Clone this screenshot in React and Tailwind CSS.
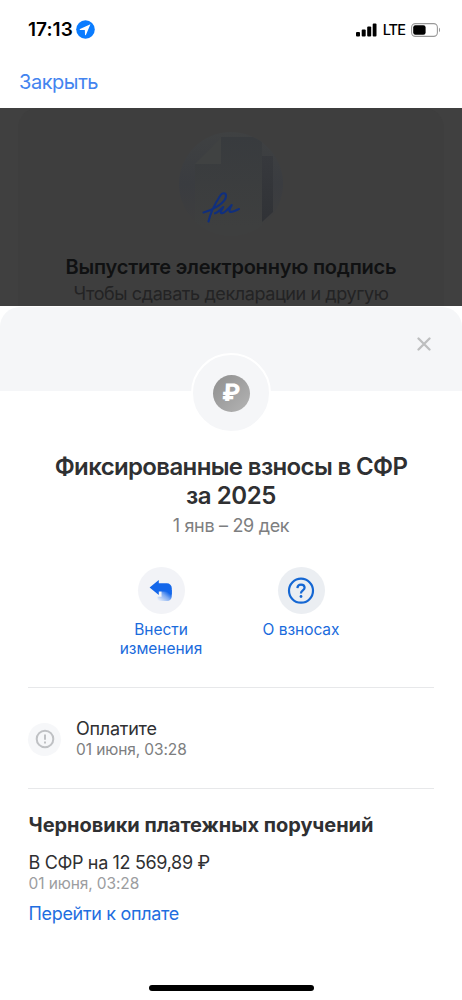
import React from 'react';

const LocationBadge = () => (
    <svg viewBox="0 0 20 20" className="h-[19px] w-[19px]">
        <circle cx="10" cy="10" r="9.8" fill="#0a7cff" />
        <path d="M15.2 4.6 4.2 9.6c-.5.2-.4.8.1.8l5 .2.2 5c0 .6.7.7.9.2z" fill="#fff" />
    </svg>
);

const SignalIcon = () => (
    <svg viewBox="0 0 21 14" className="h-[14px] w-[21px]">
        <rect x="0" y="9" width="4" height="4.6" rx="1" />
        <rect x="5.7" y="6.6" width="4" height="7" rx="1" />
        <rect x="11.2" y="3.6" width="4" height="10" rx="1" />
        <rect x="16.7" y="0.4" width="3.8" height="13.2" rx="1" />
    </svg>
);

const BatteryIcon = () => (
    <svg viewBox="0 0 30 14" className="h-[14px] w-[30px]">
        <rect x="0.6" y="0.6" width="25.8" height="12.8" rx="3.8" fill="none" stroke="#999" strokeWidth="1.1" />
        <rect x="2.2" y="2.2" width="12.4" height="9.6" rx="2.2" />
        <path d="M28 4.8c1.2.5 1.2 3.9 0 4.4z" fill="#888" />
    </svg>
);

const SignatureArt = () => (
    <svg viewBox="0 0 104 104" className="h-[104px] w-[104px]">
        <defs>
            <clipPath id="art-circle">
                <circle cx="52" cy="52" r="52" />
            </clipPath>
            <linearGradient id="art-bg" x1="0" y1="0" x2="0" y2="1">
                <stop offset="0" stopColor="#3f4142" />
                <stop offset="0.5" stopColor="#3a3c40" />
                <stop offset="0.9" stopColor="#3e3e3e" />
            </linearGradient>
            <linearGradient id="art-page" x1="0" y1="0" x2="0" y2="1">
                <stop offset="0" stopColor="#383b3e" />
                <stop offset="0.9" stopColor="#3e3f3f" />
            </linearGradient>
            <linearGradient id="art-side" x1="0" y1="0" x2="0" y2="1">
                <stop offset="0" stopColor="#37393d" />
                <stop offset="1" stopColor="#303236" />
            </linearGradient>
        </defs>
        <g clipPath="url(#art-circle)">
            <rect width="104" height="104" fill="url(#art-bg)" />
            <path d="M42 5h41v99H16V32h26z" fill="url(#art-page)" />
            <path d="M42 6v26H16z" fill="#404242" />
            <path d="M83 24h11v56L83 90z" fill="url(#art-side)" />
        </g>
        <path
            d="M24.500 80.500c8-1.800 22.500-9.500 22.500-16.500 0-3.500-3.600-3.800-6 0C36.500 71 31.500 80 29.500 89.500M36 81.300c3.200-1.200 5.500-3.500 8.200-6.300-1.700 3.200-3.500 6-1.800 6.300 2.800.4 7.100-4.800 10.300-8.300-2 3.500-3.400 6.700-1 6.900 2.800.2 5.800-2.100 8.300-2.900"
            fill="none"
            stroke="#102f7e"
            strokeWidth="2.100"
            strokeLinecap="round"
            strokeLinejoin="round"
        />
    </svg>
);

const CloseIcon = () => (
    <svg viewBox="0 0 14 14" className="h-[14px] w-[14px]">
        <path d="m1.500 1.500 11 11m0-11-11 11" stroke="#bdbebf" strokeWidth="2.300" strokeLinecap="round" />
    </svg>
);

const UndoIcon = () => (
    <svg viewBox="0 0 24 24" className="h-6 w-6">
        <defs>
            <linearGradient id="undo-tail" x1="1" y1="0.1" x2="0.1" y2="1">
                <stop offset="0.2" stopColor="#1467ea" />
                <stop offset="0.5" stopColor="#7daaf2" />
                <stop offset="1" stopColor="#f0f3f9" />
            </linearGradient>
        </defs>
        <path d="M12.500 11h10.200v6.500a4.500 4.500 0 0 1-4.500 4.500H8.500v-4.300h4z" fill="url(#undo-tail)" />
        <path d="M9.800 1.100v3.200h8a5 5 0 0 1 5 5v6.600c-1.500-2.200-3-3.400-5-3.400h-8v3.600L.6 8.500z" fill="#1467ea" />
    </svg>
);

const HelpIcon = () => (
    <svg viewBox="0 0 28 28" className="h-7 w-7" fill="none" stroke="#1567d3" strokeWidth="2.200">
        <circle cx="14" cy="13.700" r="12" />
        <path d="M10.400 11.100c.1-2.100 1.600-3.500 3.600-3.500s3.600 1.200 3.600 3.200c0 2.500-3.600 2.700-3.600 5.400v.3" />
        <circle cx="14" cy="19.500" r="1.400" fill="#1567d3" stroke="none" />
    </svg>
);

const AlertIcon = () => (
    <svg viewBox="0 0 20 20" className="h-5 w-5" fill="none" stroke="#bfc1c4" strokeWidth="2">
        <circle cx="10" cy="10" r="8.300" />
        <path d="M10 5.500v5.300M10 12.500v2" />
    </svg>
);

const actions = [
    { name: 'Внести изменения', icon: UndoIcon, bg: 'bg-[#f2f3f7]' },
    { name: 'О взносах', icon: HelpIcon, bg: 'bg-[#ebeef2]' },
];

const StatusBar = () => (
    <div className="flex h-[59px] items-center justify-between pl-[28px] pr-[21px]">
        <div className="flex items-center gap-[3px]">
            <span className="pt-[2px] text-[19px] font-semibold tracking-[0.05px]">17:13</span>
            <LocationBadge />
        </div>
        <div className="flex items-center">
            <SignalIcon />
            <span className="ml-[6px] mr-[6px] text-[14.500px] font-medium tracking-[-0.9px]">LTE</span>
            <BatteryIcon />
        </div>
    </div>
);

const Backdrop = () => (
    <div className="h-[198px] overflow-hidden bg-[#404040] px-[18px]">
        <div className="flex h-[220px] flex-col items-center rounded-[20px] bg-[#3e3e3e] pt-[24px]">
            <SignatureArt />
            <div className="mt-[17px] whitespace-nowrap text-[20px] font-semibold leading-[28px] tracking-[-0.22px] text-[#101112]">
                Выпустите электронную подпись
            </div>
            <div className="whitespace-nowrap text-[18px] leading-[26px] tracking-[-0.4px] text-[#232324]">
                Чтобы сдавать декларации и другую
            </div>
        </div>
    </div>
);

const App = () => {
    return (
        <div className="flex h-[1000px] w-[462px] flex-col overflow-hidden bg-white font-['Inter',sans-serif] text-black">
            <StatusBar />
            <div className="flex h-[49px] items-center pb-[3px] pl-[19px]">
                <button type="button" className="text-[20px] leading-[24px] tracking-[-0.45px] text-[#4384ef]">Закрыть</button>
            </div>

            <Backdrop />

            <section className="flex flex-1 flex-col pt-px text-[#2f3032]">
                <div className="flex h-[84px] justify-end rounded-t-[20px] bg-[#f5f6f8] pr-[31px] pt-[30px]">
                    <button type="button" aria-label="Закрыть окно" className="h-[14px]">
                        <CloseIcon />
                    </button>
                </div>

                <div className="-mt-[38px] flex flex-col items-center">
                    <div className="flex h-[80px] w-[80px] items-center justify-center rounded-full border-2 border-white bg-[#f5f6f8]">
                        <div className="flex h-[37px] w-[37px] items-center justify-center rounded-full bg-linear-to-br from-[#8f8f8f] to-[#b4b4b4]">
                            <span className="-skew-x-3 text-[24px] font-extrabold leading-none text-white">₽</span>
                        </div>
                    </div>
                    <h1 className="mt-[20px] text-center text-[24px] font-semibold leading-[28.500px] tracking-[-0.64px]">
                        Фиксированные взносы в СФР
                        <br />
                        <span className="tracking-[-0.4px]">за 2025</span>
                    </h1>
                    <p className="mt-[3px] text-[18px] leading-[26px] tracking-[-0.32px] text-[#7d7e80]">1 янв – 29 дек</p>
                </div>

                <div className="mt-[28px] flex justify-center">
                    {actions.map((item) => (
                        <button key={item.name} type="button" className="flex w-[140px] flex-col items-center px-5 text-[15.500px] leading-[19px] tracking-[-0.05px] text-[#1a6bdc]">
                            <span className={`mb-[6px] flex h-[47px] w-[47px] items-center justify-center rounded-full ${item.bg}`}>
                                <item.icon />
                            </span>
                            {item.name}
                        </button>
                    ))}
                </div>

                <div className="mx-[28px] mt-[29px] flex h-[102px] items-center border-y border-[#e7e8ea] pt-[2px]">
                    <div className="mr-[15px] flex h-[33px] w-[33px] items-center justify-center rounded-full bg-[#f6f7f9]">
                        <AlertIcon />
                    </div>
                    <div className="pb-[2px]">
                        <div className="text-[18px] leading-[22px] tracking-[-0.25px]">Оплатите</div>
                        <div className="text-[15.500px] leading-[19px] tracking-[-0.1px] text-[#7d7e80]">01 июня, 03:28</div>
                    </div>
                </div>

                <div className="pl-[28.500px] pr-[28px] pt-[22px]">
                    <h2 className="text-[20px] font-bold leading-[28px] tracking-[-0.02px]">Черновики платежных поручений</h2>
                    <div className="mt-[13px] text-[18px] leading-[22px] tracking-[-0.35px]">В СФР на 12 569,89 ₽</div>
                    <div className="text-[15.500px] leading-[20px] tracking-[-0.1px] text-[#9c9d9f]">01 июня, 03:28</div>
                    <a href="#pay" className="mt-[9px] block text-[18px] leading-[22px] tracking-[-0.32px] text-[#1f6ee0]">Перейти к оплате</a>
                </div>

                <div className="mx-auto mb-[9px] mt-auto h-[6px] w-[165px] rounded-full bg-black" />
            </section>
        </div>
    );
};

export default App;
